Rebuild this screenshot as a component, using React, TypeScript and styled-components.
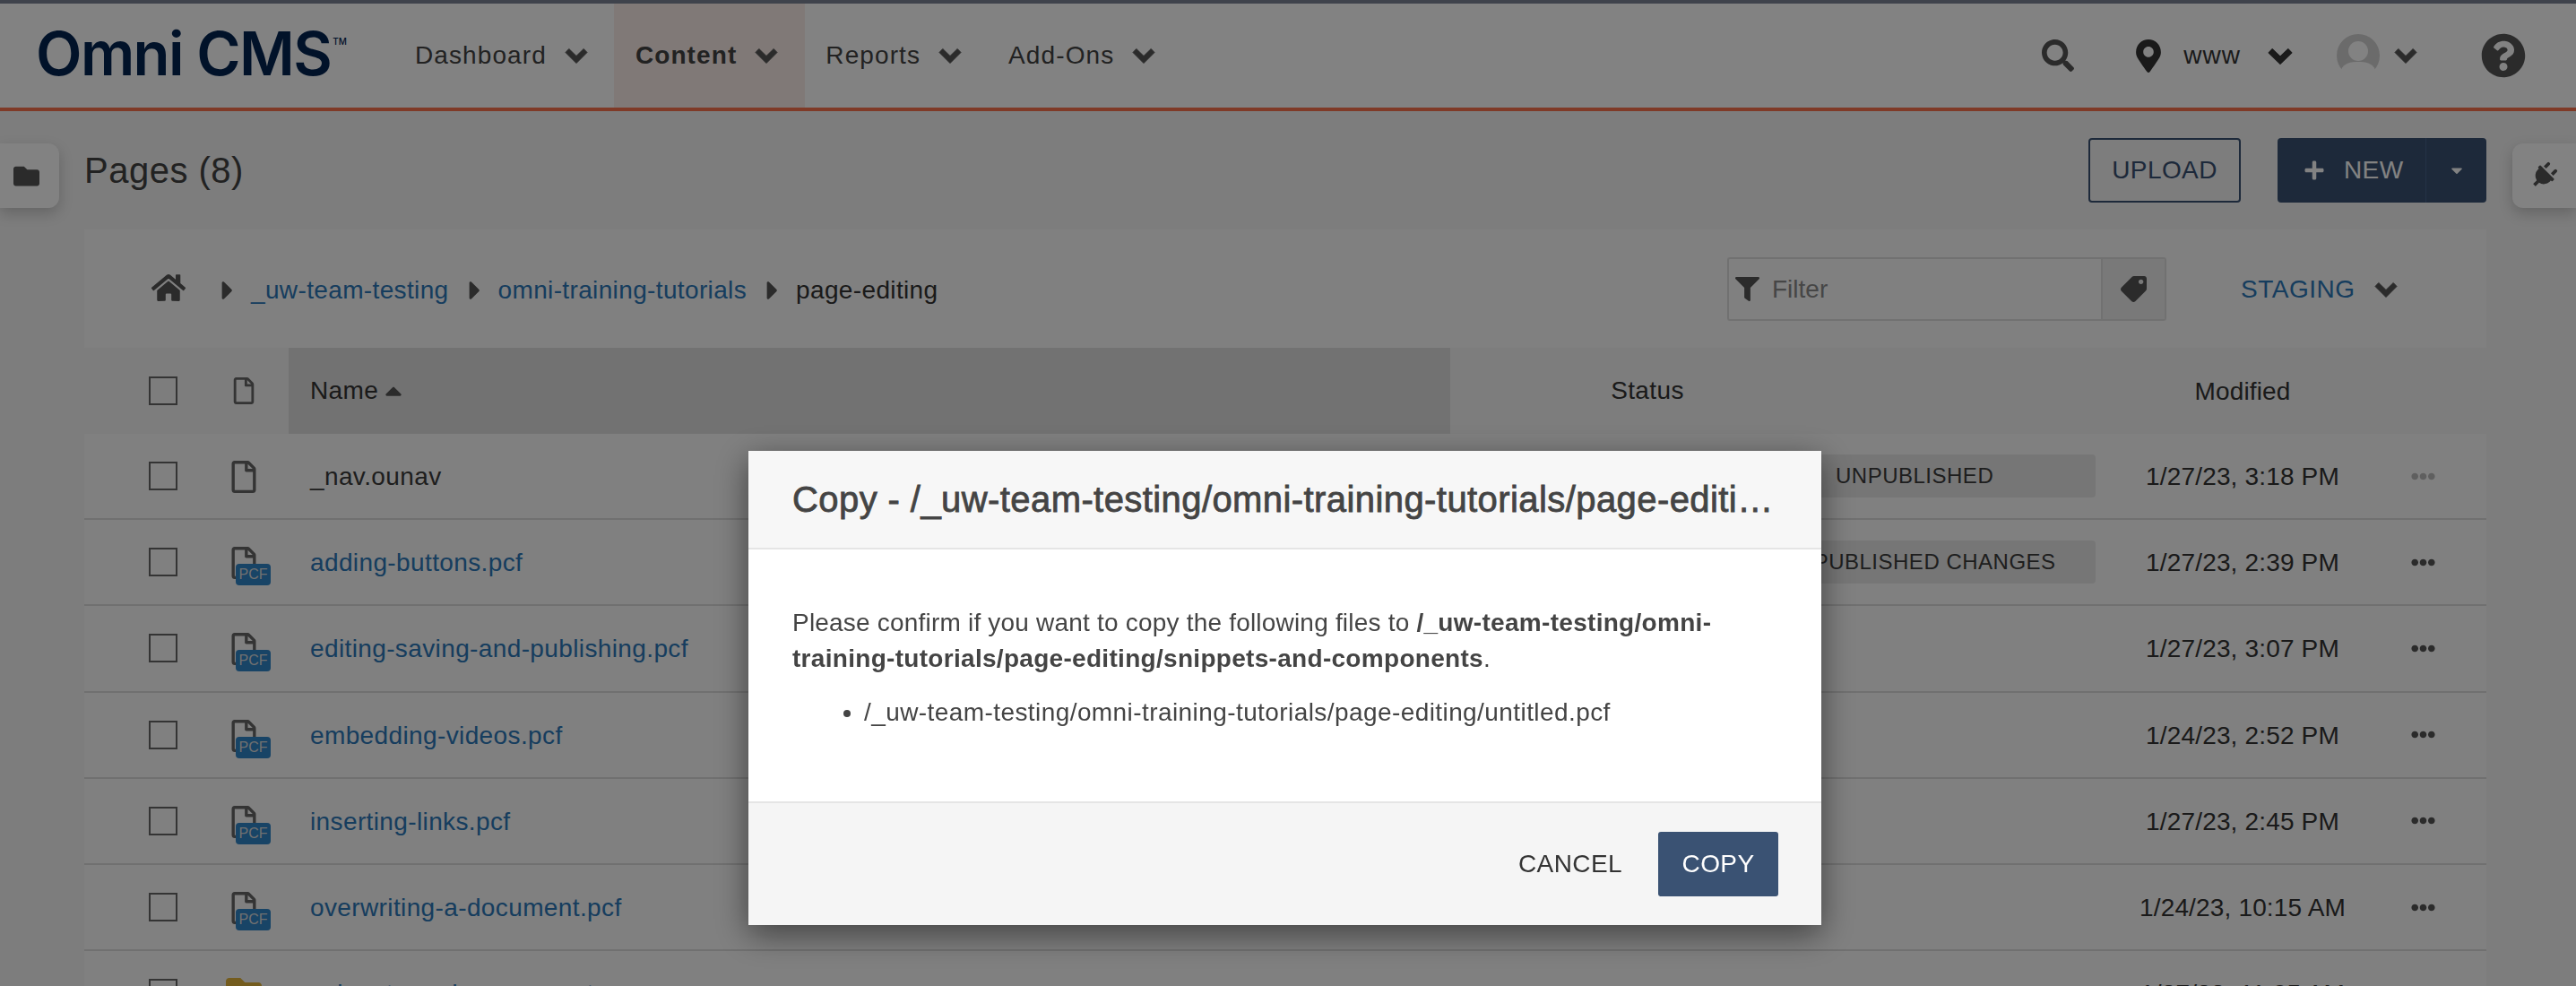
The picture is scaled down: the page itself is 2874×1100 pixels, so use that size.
import styled, { createGlobalStyle } from 'styled-components';
import {
    FaCaretDown,
    FaCaretRight,
    FaCaretUp,
    FaEllipsisH,
    FaFilter,
    FaFolder,
    FaHome,
    FaMapMarkerAlt,
    FaPlug,
    FaPlus,
    FaQuestionCircle,
    FaRegFile,
    FaSearch,
    FaTag,
} from 'react-icons/fa';

const GlobalStyle = createGlobalStyle`
    html, body {
        margin: 0;
        padding: 0;
        height: 1100px;
        overflow: hidden;
        background: #f5f5f5;
        font-family: "Liberation Sans", Arial, sans-serif;
        color: #444;
    }
    * {
        box-sizing: border-box;
    }
`;

const LINK = '#2c78b8';
const BADGE = '#3085c8';
const NAVY = '#3a5273';

const Page = styled.div`
    width: 2874px;
    height: 1100px;
    overflow: hidden;
    border-top: 4px solid #7c8496;
`;

const TopNav = styled.header`
    height: 120px;
    display: flex;
    align-items: stretch;
    background: #fff;
    border-bottom: 4px solid #f9724e;
`;

const Logo = styled.div`
    width: 440px;
    padding: 16px 0 0 40px;
    font-family: Inter, sans-serif;
    font-size: 67px;
    font-weight: 600;
    letter-spacing: -1.6px;
    color: #032452;
    display: flex;
    align-items: flex-start;
    line-height: 80px;
    white-space: nowrap;

    sup {
        font-size: 10px;
        font-weight: 500;
        line-height: 12px;
        margin: 20px 0 0 2px;
        letter-spacing: 0;
    }
`;

const NavItem = styled.div<{ $active?: boolean }>`
    display: flex;
    align-items: center;
    gap: 20px;
    padding: ${(p) => (p.$active ? '0 30px 0 24px' : '0 29px 0 23px')};
    font-size: 28px;
    letter-spacing: 1.1px;
    font-weight: ${(p) => (p.$active ? 700 : 400)};
    background: ${(p) => (p.$active ? '#fbeee9' : 'transparent')};
    color: #444;
`;

const ChevronSvg = styled.svg<{ $mx?: string; $color?: string }>`
    flex: none;
    margin: ${(p) => p.$mx ?? '0'};
    color: ${(p) => p.$color ?? '#555'};
`;

// heavy chevron, the pack's one is too thin at this size
const Chevron = ({ width = 26, height = 18, mx, color }: { width?: number; height?: number; mx?: string; color?: string }) => (
    <ChevronSvg width={width} height={height} viewBox="0 0 26 18" preserveAspectRatio="none" $mx={mx} $color={color}>
        <path d="M1 5.5 L4.8 1.5 L13 9.5 L21.2 1.5 L25 5.5 L13 17.5 Z" fill="currentColor" stroke="currentColor" strokeWidth="1" strokeLinejoin="round" />
    </ChevronSvg>
);

const NavRight = styled.div`
    margin-left: auto;
    display: flex;
    align-items: center;
    padding-right: 56px;
    font-size: 28px;
    letter-spacing: 1px;
    color: #333;
`;

const SearchIcon = styled(FaSearch)`
    width: 36px;
    height: 36px;
    color: #555;
    margin-right: 69px;
`;

const MarkerIcon = styled(FaMapMarkerAlt)`
    width: 28px;
    height: 37px;
    color: #333;
    margin-right: 25px;
`;

const HelpIcon = styled(FaQuestionCircle)`
    width: 50px;
    height: 50px;
    color: #555;
`;

const Avatar = () => (
    <svg width="48" height="48" viewBox="0 0 48 48">
        <circle cx="24" cy="24" r="24" fill="#d2d2d2" />
        <circle cx="24" cy="19" r="11" fill="#fff" />
        <path d="M5 40c3-8 11-9 19-9s16 1 19 9a24 24 0 0 1-38 0z" fill="#fff" />
    </svg>
);

const TitleBar = styled.div`
    height: 132px;
    display: flex;
    align-items: center;
    position: relative;
    padding: 0 100px 0 94px;
`;

const SideTab = styled.div<{ $side: 'left' | 'right' }>`
    position: absolute;
    top: 36px;
    ${(p) => p.$side}: 0;
    width: ${(p) => (p.$side === 'left' ? '66px' : '71px')};
    height: 72px;
    display: flex;
    align-items: center;
    padding-left: ${(p) => (p.$side === 'left' ? '15px' : '20px')};
    background: #fff;
    border-radius: ${(p) => (p.$side === 'left' ? '0 12px 12px 0' : '12px 0 0 12px')};
    box-shadow: 0 6px 16px rgba(0, 0, 0, 0.2);
    color: #555;
`;

const PlugIcon = styled(FaPlug)`
    width: 30px;
    height: 30px;
    transform: rotate(45deg);
`;

const PageTitle = styled.h1`
    flex: 1;
    margin: 0;
    font-size: 40px;
    font-weight: 400;
    letter-spacing: 0.5px;
    color: #444;
`;

const OutlineButton = styled.div`
    width: 170px;
    height: 72px;
    border: 2px solid ${NAVY};
    border-radius: 4px;
    display: flex;
    align-items: center;
    justify-content: center;
    font-size: 28px;
    letter-spacing: 0.4px;
    color: ${NAVY};
    margin-right: 41px;
`;

const SplitButton = styled.div`
    width: 233px;
    height: 72px;
    display: flex;
    background: ${NAVY};
    border-radius: 4px;
    color: #fff;
    font-size: 28px;
    letter-spacing: 0.4px;
`;

const SplitMain = styled.div`
    width: 166px;
    display: flex;
    align-items: center;
    gap: 21px;
    padding-left: 29px;
    border-right: 1px solid #46628a;
`;

const SplitCaret = styled.div`
    flex: 1;
    display: flex;
    align-items: center;
    justify-content: center;
`;

const Card = styled.section`
    margin: 0 100px 0 94px;
    background: #fbfbfb;
`;

const Toolbar = styled.div`
    height: 132px;
    display: flex;
    align-items: center;
    padding: 4px 0 0 74px;
    font-size: 28px;
    letter-spacing: 0.36px;
`;

const Crumbs = styled.nav`
    display: flex;
    align-items: center;
    flex: 1;
`;

const HomeIcon = styled(FaHome)`
    width: 40px;
    height: 34px;
    color: #555;
    margin: -6px 36px 0 0;
`;

const CrumbCaret = styled(FaCaretRight)`
    width: 20px;
    height: 34px;
    color: #555;
    margin: 0 16px 0 0;
`;

const CrumbLink = styled.a`
    color: ${LINK};
    margin-right: 19px;
`;

const CrumbCurrent = styled.span`
    color: #333;
`;

const FilterBox = styled.div`
    width: 490px;
    height: 71px;
    margin-top: -3px;
    display: flex;
    border: 2px solid #dedede;
    border-radius: 3px;
    letter-spacing: 0;
`;

const FilterField = styled.div`
    flex: 1;
    display: flex;
    align-items: center;
    gap: 14px;
    padding-left: 7px;
    color: #8a8a8a;
`;

const FilterAddon = styled.div`
    width: 71px;
    display: flex;
    align-items: center;
    justify-content: center;
    background: #ededed;
    border-left: 2px solid #dedede;
`;

const TagIcon = styled(FaTag)`
    width: 29px;
    height: 29px;
    color: #555;
    transform: rotate(90deg);
`;

const Staging = styled.div`
    width: 357px;
    margin-top: -3px;
    display: flex;
    align-items: center;
    gap: 22px;
    padding-left: 83px;
    letter-spacing: 0.5px;
    color: ${LINK};
`;

const RowGrid = styled.div<{ $head?: boolean }>`
    height: ${(p) => (p.$head ? '96px' : '96.2px')};
    display: grid;
    grid-template-columns: 72px 92px 64px 1296px 740px 288px 128px;
    align-items: center;
    font-size: 28px;
    letter-spacing: 0.38px;
    background: ${(p) => (p.$head ? '#f5f5f5' : 'transparent')};
    border-bottom: ${(p) => (p.$head ? 'none' : '2px solid #dcdcdc')};
    color: #3c3c3c;
`;

const Checkbox = styled.span`
    grid-column: 2;
    width: 32px;
    height: 32px;
    border: 2px solid #666;
    display: block;
`;

const IconCell = styled.span`
    position: relative;
    display: block;
    color: #666;
    height: 36px;
    margin-top: 2px;
`;

const HeadFileIcon = styled(FaRegFile)`
    display: block;
    width: 30px;
    height: 30px;
    margin: 2px 0 0 -1px;
`;

const RowFileIcon = styled(FaRegFile)`
    display: block;
    width: 36px;
    height: 36px;
    margin-left: -4px;
`;

const RowFolderIcon = styled(FaFolder)`
    display: block;
    width: 40px;
    height: 40px;
    margin: -5px 0 0 -6px;
    color: #e4b53c;
`;

const PcfBadge = styled.span`
    position: absolute;
    left: 5px;
    top: 19px;
    width: 39px;
    height: 24px;
    border-radius: 4px;
    background: ${BADGE};
    color: #ddd;
    font-size: 16px;
    letter-spacing: 0;
    line-height: 24px;
    text-align: center;
`;

const NameHead = styled.div`
    height: 100%;
    display: flex;
    align-items: center;
    gap: 2px;
    padding-left: 24px;
    background: #e0e0e0;
    color: #333;
`;

const NameCell = styled.div<{ $link: boolean }>`
    padding: 2px 0 0 24px;
    color: ${(p) => (p.$link ? LINK : '#3c3c3c')};
`;

const StatusHead = styled.div`
    text-align: center;
    padding-right: 300px;
    color: #333;
`;

const StatusCell = styled.div`
    display: flex;
    justify-content: flex-end;
    padding-right: 20px;
`;

const Pill = styled.span<{ $indent: number }>`
    width: 408px;
    height: 48px;
    display: flex;
    align-items: center;
    padding-left: ${(p) => p.$indent}px;
    background: #e8e8e8;
    border-radius: 4px;
    font-size: 24px;
    letter-spacing: 0.5px;
`;

const DateCell = styled.div`
    padding-top: 2px;
    text-align: center;
    letter-spacing: 0.16px;
    color: #333;
`;

const Dots = styled(FaEllipsisH)<{ $faded: boolean }>`
    width: 27px;
    height: 27px;
    margin-left: 44px;
    color: ${(p) => (p.$faded ? '#bbb' : '#555')};
`;

const Overlay = styled.div`
    position: fixed;
    inset: 0;
    background: rgba(0, 0, 0, 0.49);
    padding: 503px 0 0 835px;
`;

const Modal = styled.div`
    width: 1197px;
    height: 529px;
    display: flex;
    flex-direction: column;
    background: #fff;
    box-shadow: 0 10px 34px rgba(0, 0, 0, 0.5);
    color: #444;
`;

const ModalHead = styled.div`
    height: 110px;
    flex: none;
    display: flex;
    align-items: center;
    padding: 0 42px 0 49px;
    background: #f7f7f7;
    border-bottom: 2px solid #e5e5e5;
`;

const ModalTitle = styled.h2`
    margin: 0;
    font-size: 40px;
    font-weight: 400;
    letter-spacing: 0.42px;
    -webkit-text-stroke: 0.8px #444;
    overflow: hidden;
    white-space: nowrap;
    text-overflow: ellipsis;
`;

const ModalBody = styled.div`
    flex: 1;
    padding: 62px 49px 0;
    font-size: 28px;
    line-height: 40px;
`;

const BodyText = styled.p`
    margin: 0;
    letter-spacing: 0.2px;

    strong {
        letter-spacing: 0.3px;
    }
`;

const FileList = styled.ul`
    margin: 20px 0 0;
    padding-left: 80px;
    letter-spacing: 0.42px;
`;

const ModalFoot = styled.div`
    height: 138px;
    flex: none;
    display: flex;
    align-items: center;
    justify-content: flex-end;
    gap: 40px;
    padding: 0 48px 0 0;
    background: #f5f5f5;
    border-top: 2px solid #e5e5e5;
    font-size: 28px;
    letter-spacing: 0.4px;
`;

const CancelButton = styled.span`
    color: #333;
`;

const CopyButton = styled.span`
    width: 134px;
    height: 72px;
    display: flex;
    align-items: center;
    justify-content: center;
    background: ${NAVY};
    border-radius: 3px;
    color: #fff;
`;

interface FileRow {
    name: string;
    kind: 'plain' | 'pcf' | 'folder';
    date: string;
    status?: string;
    indent?: number;
}

const rows: FileRow[] = [
    { name: '_nav.ounav', kind: 'plain', date: '1/27/23, 3:18 PM', status: 'UNPUBLISHED', indent: 118 },
    { name: 'adding-buttons.pcf', kind: 'pcf', date: '1/27/23, 2:39 PM', status: 'UNPUBLISHED CHANGES', indent: 58 },
    { name: 'editing-saving-and-publishing.pcf', kind: 'pcf', date: '1/27/23, 3:07 PM' },
    { name: 'embedding-videos.pcf', kind: 'pcf', date: '1/24/23, 2:52 PM' },
    { name: 'inserting-links.pcf', kind: 'pcf', date: '1/27/23, 2:45 PM' },
    { name: 'overwriting-a-document.pcf', kind: 'pcf', date: '1/24/23, 10:15 AM' },
    { name: 'snippets-and-components', kind: 'folder', date: '1/27/23, 11:05 AM' },
];

function App() {
    return (
        <>
            <GlobalStyle />
            <Page>
                <TopNav>
                    <Logo>
                        Omni CMS<sup>TM</sup>
                    </Logo>
                    <NavItem>
                        Dashboard <Chevron />
                    </NavItem>
                    <NavItem $active>
                        Content <Chevron />
                    </NavItem>
                    <NavItem>
                        Reports <Chevron />
                    </NavItem>
                    <NavItem>
                        Add-Ons <Chevron />
                    </NavItem>
                    <NavRight>
                        <SearchIcon />
                        <MarkerIcon />
                        www
                        <Chevron width={28} height={19} mx="0 49px 0 30px" color="#333" />
                        <Avatar />
                        <Chevron mx="0 71px 0 16px" />
                        <HelpIcon />
                    </NavRight>
                </TopNav>

                <TitleBar>
                    <SideTab $side="left">
                        <FaFolder size={29} />
                    </SideTab>
                    <PageTitle>Pages (8)</PageTitle>
                    <OutlineButton>UPLOAD</OutlineButton>
                    <SplitButton>
                        <SplitMain>
                            <FaPlus size={24} />
                            NEW
                        </SplitMain>
                        <SplitCaret>
                            <FaCaretDown size={20} />
                        </SplitCaret>
                    </SplitButton>
                    <SideTab $side="right">
                        <PlugIcon />
                    </SideTab>
                </TitleBar>

                <Card>
                    <Toolbar>
                        <Crumbs>
                            <HomeIcon />
                            <CrumbCaret />
                            <CrumbLink>_uw-team-testing</CrumbLink>
                            <CrumbCaret />
                            <CrumbLink>omni-training-tutorials</CrumbLink>
                            <CrumbCaret />
                            <CrumbCurrent>page-editing</CrumbCurrent>
                        </Crumbs>
                        <FilterBox>
                            <FilterField>
                                <FaFilter size={27} color="#555" />
                                Filter
                            </FilterField>
                            <FilterAddon>
                                <TagIcon />
                            </FilterAddon>
                        </FilterBox>
                        <Staging>
                            STAGING
                            <Chevron />
                        </Staging>
                    </Toolbar>

                    <RowGrid $head>
                        <Checkbox />
                        <IconCell>
                            <HeadFileIcon />
                        </IconCell>
                        <NameHead>
                            Name <FaCaretUp size={30} color="#555" />
                        </NameHead>
                        <StatusHead>Status</StatusHead>
                        <DateCell>Modified</DateCell>
                    </RowGrid>

                    {rows.map((row) => (
                        <RowGrid key={row.name}>
                            <Checkbox />
                            <IconCell>
                                {row.kind === 'folder' ? <RowFolderIcon /> : <RowFileIcon />}
                                {row.kind === 'pcf' && <PcfBadge>PCF</PcfBadge>}
                            </IconCell>
                            <NameCell $link={row.kind !== 'plain'}>{row.name}</NameCell>
                            <StatusCell>
                                {row.status && <Pill $indent={row.indent ?? 0}>{row.status}</Pill>}
                            </StatusCell>
                            <DateCell>{row.date}</DateCell>
                            <Dots $faded={row.kind === 'plain'} />
                        </RowGrid>
                    ))}
                </Card>
            </Page>

            <Overlay>
                <Modal>
                    <ModalHead>
                        <ModalTitle>
                            Copy - /_uw-team-testing/omni-training-tutorials/page-editing/snippets-and-components
                        </ModalTitle>
                    </ModalHead>
                    <ModalBody>
                        <BodyText>
                            Please confirm if you want to copy the following files to{' '}
                            <strong>/_uw-team-testing/omni-training-tutorials/page-editing/snippets-and-components</strong>.
                        </BodyText>
                        <FileList>
                            <li>/_uw-team-testing/omni-training-tutorials/page-editing/untitled.pcf</li>
                        </FileList>
                    </ModalBody>
                    <ModalFoot>
                        <CancelButton>CANCEL</CancelButton>
                        <CopyButton>COPY</CopyButton>
                    </ModalFoot>
                </Modal>
            </Overlay>
        </>
    );
}

export default App;
